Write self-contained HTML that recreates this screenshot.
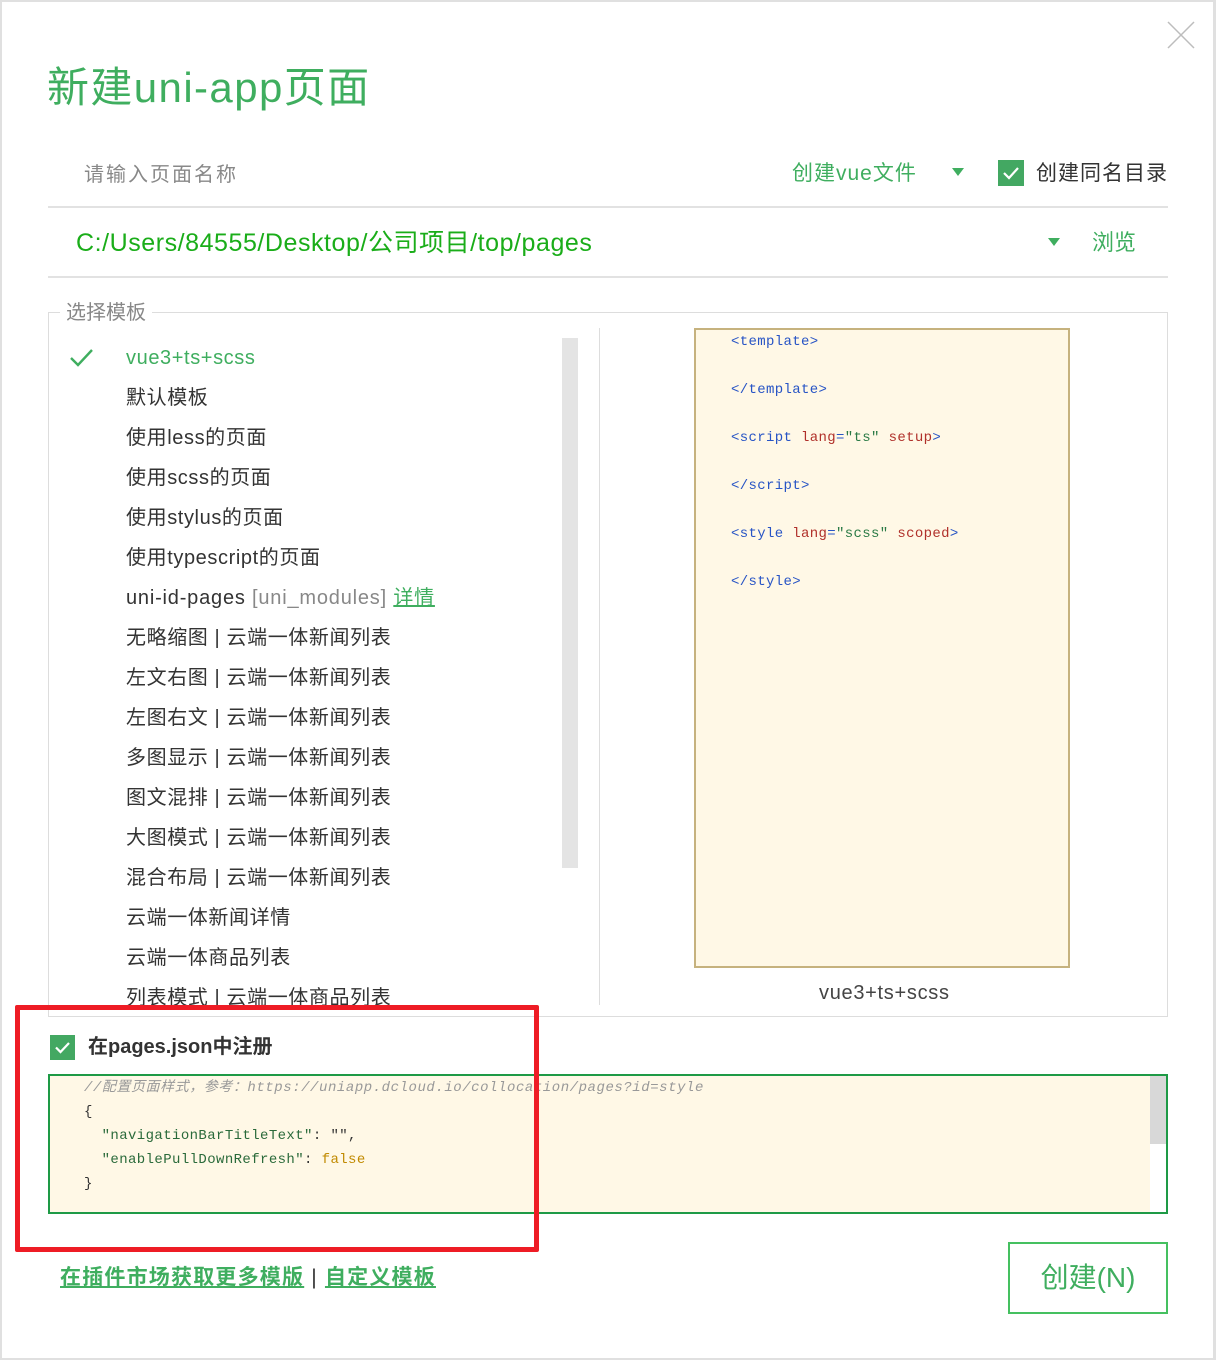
<!DOCTYPE html>
<html><head><meta charset="utf-8"><style>
*{margin:0;padding:0;box-sizing:border-box}
body{width:1216px;height:1360px;background:#fff;position:relative;overflow:hidden;font-family:"Liberation Sans","Noto Sans CJK SC",sans-serif;color:#333}
.a{position:absolute;white-space:nowrap}
.frame{position:absolute;left:0;top:0;width:1216px;height:1360px;border:2px solid #e0e0e0;border-right-width:3px}
.li{position:absolute;left:126px;font-size:20px;color:#333;line-height:24px;letter-spacing:0.6px}
.code{font-family:"Liberation Mono","Noto Sans CJK SC",monospace;font-size:14px;color:#2754c5;letter-spacing:0.35px}
.r{color:#b0302a}
.s{color:#2a7a45}
</style></head><body>
<div class="frame"></div>
<svg class="a" style="left:1166px;top:20px" width="30" height="30"><path d="M2 2L28 28M28 2L2 28" stroke="#bdbdbd" stroke-width="1.5"/></svg>
<div class="a" style="left:47px;top:62px;font-size:42px;color:#3fae5f;line-height:52px;letter-spacing:1.4px">新建uni-app页面</div>

<div class="a" style="left:84px;top:162px;font-size:20px;color:#888;line-height:26px;letter-spacing:2px">请输入页面名称</div>
<div class="a" style="left:792px;top:160px;font-size:21px;color:#3fae5f;line-height:28px;letter-spacing:1px">创建vue文件</div>
<div class="a" style="left:952px;top:168px;width:0;height:0;border-left:6px solid transparent;border-right:6px solid transparent;border-top:8px solid #3fae5f"></div>
<div class="a" style="left:998px;top:160px;width:26px;height:26px;background:#43a862"><svg width="26" height="26"><path d="M6 13L11 18L20 8" stroke="#fff" stroke-width="2.2" fill="none"/></svg></div>
<div class="a" style="left:1036px;top:160px;font-size:21px;color:#333;line-height:28px;letter-spacing:1px">创建同名目录</div>
<div class="a" style="left:48px;top:206px;width:1120px;height:2px;background:#e2e2e2"></div>

<div class="a" style="left:76px;top:228px;font-size:25px;color:#1aad19;line-height:30px;letter-spacing:0.55px">C:/Users/84555/Desktop/公司项目/top/pages</div>
<div class="a" style="left:1048px;top:238px;width:0;height:0;border-left:6px solid transparent;border-right:6px solid transparent;border-top:8px solid #3fae5f"></div>
<div class="a" style="left:1092px;top:229px;font-size:22px;color:#3fae5f;line-height:28px">浏览</div>
<div class="a" style="left:48px;top:276px;width:1120px;height:2px;background:#e2e2e2"></div>

<div class="a" style="left:48px;top:312px;width:1120px;height:705px;border:1px solid #ddd"></div>
<div class="a" style="left:60px;top:300px;background:#fff;padding:0 6px;font-size:20px;color:#888;line-height:26px">选择模板</div>
<div class="a" style="left:562px;top:338px;width:16px;height:530px;background:#e4e4e4"></div>
<div class="a" style="left:599px;top:328px;width:1px;height:677px;background:#ddd"></div>

<svg class="a" style="left:68px;top:346px" width="28" height="24"><path d="M3 12L10 19L24 4" stroke="#3fae5f" stroke-width="2.4" fill="none"/></svg>
<div style="position:absolute;left:0;top:0;width:560px;height:1005px;overflow:hidden">
<div class="li" style="top:346px;color:#3fae5f">vue3+ts+scss</div>
<div class="li" style="top:386px">默认模板</div>
<div class="li" style="top:426px">使用less的页面</div>
<div class="li" style="top:466px">使用scss的页面</div>
<div class="li" style="top:506px">使用stylus的页面</div>
<div class="li" style="top:546px">使用typescript的页面</div>
<div class="li" style="top:586px;letter-spacing:0.8px">uni-id-pages <span style="color:#888">[uni_modules]</span> <span style="color:#3fae5f;text-decoration:underline">详情</span></div>
<div class="li" style="top:626px">无略缩图 | 云端一体新闻列表</div>
<div class="li" style="top:666px">左文右图 | 云端一体新闻列表</div>
<div class="li" style="top:706px">左图右文 | 云端一体新闻列表</div>
<div class="li" style="top:746px">多图显示 | 云端一体新闻列表</div>
<div class="li" style="top:786px">图文混排 | 云端一体新闻列表</div>
<div class="li" style="top:826px">大图模式 | 云端一体新闻列表</div>
<div class="li" style="top:866px">混合布局 | 云端一体新闻列表</div>
<div class="li" style="top:906px">云端一体新闻详情</div>
<div class="li" style="top:946px">云端一体商品列表</div>
<div class="li" style="top:986px">列表模式 | 云端一体商品列表</div>
</div>

<div class="a" style="left:694px;top:328px;width:376px;height:640px;background:#fff8e6;border:2px solid #c6b27e"></div>
<div class="a code" style="left:731px;top:333px;line-height:18px">&lt;template&gt;</div>
<div class="a code" style="left:731px;top:381px;line-height:18px">&lt;/template&gt;</div>
<div class="a code" style="left:731px;top:429px;line-height:18px">&lt;script <span class="r">lang</span>=<span class="s">"ts"</span> <span class="r">setup</span>&gt;</div>
<div class="a code" style="left:731px;top:477px;line-height:18px">&lt;/script&gt;</div>
<div class="a code" style="left:731px;top:525px;line-height:18px">&lt;style <span class="r">lang</span>=<span class="s">"scss"</span> <span class="r">scoped</span>&gt;</div>
<div class="a code" style="left:731px;top:573px;line-height:18px">&lt;/style&gt;</div>
<div class="a" style="left:819px;top:981px;font-size:20px;color:#444;line-height:24px;letter-spacing:0.7px">vue3+ts+scss</div>

<div class="a" style="left:50px;top:1035px;width:25px;height:25px;background:#43a862"><svg width="25" height="25"><path d="M6 12.5L10.5 17L19 8" stroke="#fff" stroke-width="2.2" fill="none"/></svg></div>
<div class="a" style="left:88px;top:1034px;font-size:20px;color:#333;font-weight:bold;line-height:26px">在pages.json中注册</div>

<div class="a" style="left:48px;top:1074px;width:1120px;height:140px;background:#fff8e6;border:2px solid #1e9a46"></div>
<div class="a" style="left:1150px;top:1076px;width:16px;height:68px;background:#d8d8d8"></div>
<div class="a" style="left:1150px;top:1144px;width:16px;height:68px;background:#fff"></div>
<div class="a code" style="left:84px;top:1079px;line-height:18px;color:#999;font-style:italic;letter-spacing:0.55px">//配置页面样式，参考：https://uniapp.dcloud.io/collocation/pages?id=style</div>
<div class="a code" style="left:84px;top:1103px;line-height:18px;color:#333">{</div>
<div class="a code" style="left:84px;top:1127px;line-height:18px;color:#2a6a3a;letter-spacing:0.4px">&nbsp;&nbsp;"navigationBarTitleText"<span style="color:#333">: "",</span></div>
<div class="a code" style="left:84px;top:1151px;line-height:18px;color:#2a6a3a;letter-spacing:0.4px">&nbsp;&nbsp;"enablePullDownRefresh"<span style="color:#333">: </span><span style="color:#c18a00">false</span></div>
<div class="a code" style="left:84px;top:1175px;line-height:18px;color:#333">}</div>

<div class="a" style="left:15px;top:1005px;width:524px;height:247px;border:5px solid #ee1c25;border-radius:2px"></div>

<div class="a" style="left:60px;top:1264px;font-size:21px;font-weight:bold;color:#3fae5f;line-height:28px;letter-spacing:1.2px"><span style="text-decoration:underline">在插件市场获取更多模版</span> <span style="color:#333;font-weight:normal">|</span> <span style="text-decoration:underline">自定义模板</span></div>
<div class="a" style="left:1008px;top:1242px;width:160px;height:72px;border:2px solid #45c060;font-size:28px;color:#3fae5f;text-align:center;line-height:68px">创建(N)</div>
</body></html>
